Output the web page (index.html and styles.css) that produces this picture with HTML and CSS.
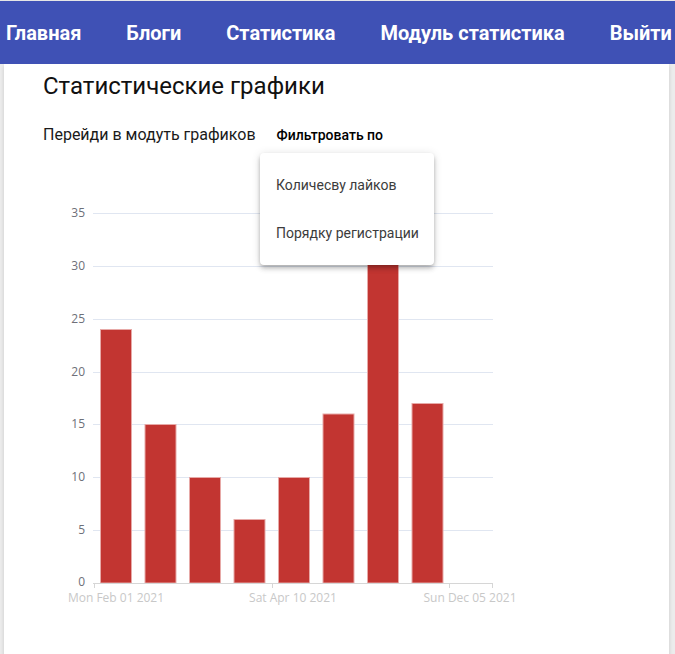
FILE: index.html
```html
<!DOCTYPE html>
<html lang="ru">
<head>
    <meta charset="UTF-8">
    <meta name="viewport" content="width=device-width, initial-scale=1.0">
    <title>Статистические графики</title>
    <link rel="stylesheet" href="styles.css">
</head>
<body>
    <nav class="navbar">
        <a href="#">Главная</a>
        <a href="#">Блоги</a>
        <a href="#">Статистика</a>
        <a href="#">Модуль статистика</a>
        <a href="#">Выйти</a>
    </nav>

    <main class="card">
        <h1>Статистические графики</h1>
        <div class="toolbar">
            <span class="goto">Перейди в модуть графиков</span>
            <button class="filter-btn">Фильтровать по</button>
        </div>

        <div class="menu">
            <div class="menu-item">Количесву лайков</div>
            <div class="menu-item">Порядку регистрации</div>
        </div>

        <svg class="chart" width="480" height="420" viewBox="0 0 480 420">
            <!-- grid -->
            <g class="grid">
                <line x1="50" x2="450" y1="23.5" y2="23.5"/>
                <line x1="50" x2="450" y1="76.5" y2="76.5"/>
                <line x1="50" x2="450" y1="129.5" y2="129.5"/>
                <line x1="50" x2="450" y1="182.5" y2="182.5"/>
                <line x1="50" x2="450" y1="234.5" y2="234.5"/>
                <line x1="50" x2="450" y1="287.5" y2="287.5"/>
                <line x1="50" x2="450" y1="340.5" y2="340.5"/>
            </g>
            <g class="y-labels">
                <text x="42" y="27">35</text>
                <text x="42" y="80">30</text>
                <text x="42" y="133">25</text>
                <text x="42" y="186">20</text>
                <text x="42" y="238">15</text>
                <text x="42" y="291">10</text>
                <text x="42" y="344">5</text>
                <text x="42" y="396">0</text>
            </g>
            <!-- bars -->
            <g class="bars">
                <rect x="57.5" y="139.5" width="31" height="253.5"/>
                <rect x="102" y="234.5" width="31" height="158.5"/>
                <rect x="146.5" y="287.5" width="31" height="105.5"/>
                <rect x="191" y="329.5" width="31" height="63.5"/>
                <rect x="235.5" y="287.5" width="31" height="105.5"/>
                <rect x="280" y="224" width="31" height="169"/>
                <rect x="324.5" y="44" width="31" height="349"/>
                <rect x="369" y="213.5" width="31" height="179.5"/>
            </g>
            <!-- x axis -->
            <g class="axis">
                <line x1="50" x2="450" y1="393.5" y2="393.5"/>
                <line x1="51.5" x2="51.5" y1="393" y2="398"/>
                <line x1="229.5" x2="229.5" y1="393" y2="398"/>
                <line x1="406.5" x2="406.5" y1="393" y2="398"/>
                <line x1="449.5" x2="449.5" y1="393" y2="398"/>
            </g>
            <g class="x-labels">
                <text x="73" y="412">Mon Feb 01 2021</text>
                <text x="250" y="412">Sat Apr 10 2021</text>
                <text x="427" y="412">Sun Dec 05 2021</text>
            </g>
        </svg>
    </main>
</body>
</html>
```

FILE: styles.css
```css
body {
    margin: 0;
    background-color: #ececec;
    font-family: Roboto, "Liberation Sans", sans-serif;
    overflow: hidden;
}
.navbar {
    display: flex;
    align-items: center;
    height: 63px;
    border-top: 1px solid #e6e6e6;
    padding-left: 6px;
    background-color: #3f51b5;
    white-space: nowrap;
    position: relative;
    z-index: 2;
}
.navbar a {
    color: #fff;
    text-decoration: none;
    font-size: 20px;
    font-weight: 700;
    margin-right: 45px;
}
.card {
    position: relative;
    margin: 0 6px 0 4px;
    padding: 8px 39px 0;
    min-height: 640px;
    background-color: #fff;
    box-shadow: 0 2px 4px rgba(0, 0, 0, 0.15);
}
h1 {
    margin: 0;
    font-size: 24px;
    line-height: 28px;
    font-weight: 400;
    color: #111;
}
.toolbar {
    display: flex;
    align-items: baseline;
    margin-top: 25px;
}
.goto {
    font-size: 16px;
    line-height: 19px;
    color: #1a1a1a;
}
.filter-btn {
    margin-left: 21px;
    padding: 0;
    border: none;
    background: none;
    font-family: Roboto, sans-serif;
    font-size: 14px;
    font-weight: 500;
    color: #000;
    cursor: pointer;
}
.menu {
    position: absolute;
    left: 256px;
    top: 89px;
    width: 174px;
    padding: 8px 0;
    background-color: #fff;
    border-radius: 4px;
    box-shadow: 0 2px 4px -1px rgba(0, 0, 0, 0.2), 0 4px 5px rgba(0, 0, 0, 0.14), 0 1px 10px rgba(0, 0, 0, 0.12);
    z-index: 1;
}
.menu-item {
    height: 48px;
    line-height: 48px;
    padding-left: 16px;
    font-size: 14px;
    color: #3c3c3c;
}
.chart {
    display: block;
    margin-top: 46px;
}
.grid line {
    stroke: #e0e6f1;
    stroke-width: 1;
}
.y-labels text {
    font-family: "Open Sans", "Liberation Sans", sans-serif;
    font-size: 12px;
    fill: #6e7079;
    text-anchor: end;
}
.bars rect {
    fill: #c23531;
    stroke: #e7a9a7;
    stroke-width: 1;
}
.axis line {
    stroke: #d6d6d6;
    stroke-width: 1;
}
.x-labels text {
    font-family: "Open Sans", "Liberation Sans", sans-serif;
    font-size: 12px;
    fill: #c8c8c8;
    text-anchor: middle;
}
```
